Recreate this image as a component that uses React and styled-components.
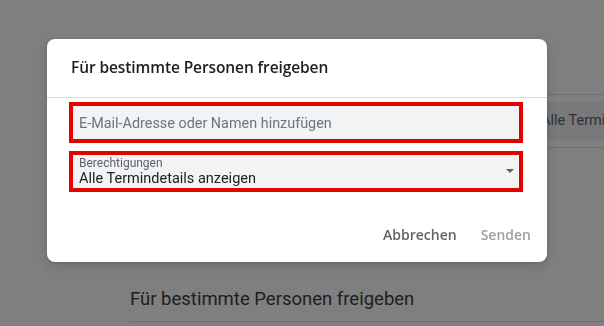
import React from "react";
import styled, { createGlobalStyle } from "styled-components";

const GlobalStyle = createGlobalStyle`
  html, body {
    margin: 0;
    padding: 0;
    background: #ffffff;
    overflow: hidden;
  }
  body {
    font-family: Roboto, "Liberation Sans", Arial, sans-serif;
  }
`;

const Page = styled.div`
  width: 604px;
  height: 326px;
  padding: 94px 0 0 130px;
  box-sizing: border-box;
`;

const Rule = styled.div`
  height: 1px;
  background: #dadce0;
  margin-top: ${(p) => p.$top || 0}px;
`;

const FieldRow = styled.div`
  display: grid;
  grid-template-columns: 395px 1fr;
  gap: 8px;
  margin-top: 7px;
`;

const PageField = styled.div`
  height: 38px;
  line-height: 38px;
  padding-left: 8px;
  background: #f1f3f4;
  font-size: 14.5px;
  color: #5f6368;
  white-space: nowrap;
  overflow: hidden;
`;

const PageHeading = styled.h2`
  margin: 137px 0 0;
  padding-bottom: 8px;
  border-bottom: 1px solid #dadce0;
  font-family: Roboto, sans-serif;
  font-weight: 400;
  font-size: 18.5px;
  line-height: 28px;
  color: #3c4043;
`;

const Scrim = styled.div`
  position: fixed;
  inset: 0;
  background: rgba(0, 0, 0, 0.5);
  padding: 39px 0 0 47px;
`;

const Dialog = styled.div`
  width: 500px;
  background: #ffffff;
  border-radius: 8px;
  box-shadow: 0 1px 3px rgba(60, 64, 67, 0.3), 0 4px 8px 3px rgba(60, 64, 67, 0.15);
  overflow: hidden;
`;

const Title = styled.div`
  padding: 16px 24px 18px 24px;
  font-family: "Open Sans", Roboto, sans-serif;
  font-weight: 600;
  font-size: 15.5px;
  line-height: 24px;
  letter-spacing: -0.1px;
  color: #202124;
`;

const Divider = styled.div`
  height: 1px;
  background: #dadce0;
`;

const Fields = styled.div`
  display: flex;
  flex-direction: column;
  gap: 8px;
  padding: 4px 24px 0 22px;
`;

const Field = styled.div`
  height: 41px;
  box-sizing: border-box;
  border: 4px solid #e60000;
  background: #f1f3f4;
  display: flex;
  align-items: ${(p) => (p.$select ? "stretch" : "center")};
  padding: 0 5px 0 6px;
`;

const Placeholder = styled.div`
  font-size: 14.4px;
  line-height: 33px;
  padding-top: 1px;
  color: #70757a;
`;

const SelectText = styled.div`
  flex: 1;
  padding-top: 1px;
`;

const SelectLabel = styled.div`
  font-size: 12px;
  line-height: 14px;
  color: #5f6368;
`;

const SelectValue = styled.div`
  font-size: 14.5px;
  line-height: 18px;
  color: #202124;
`;

const Arrow = styled.div`
  align-self: center;
  width: 0;
  height: 0;
  border-left: 4px solid transparent;
  border-right: 4px solid transparent;
  border-top: 4px solid #5f6368;
  margin-bottom: 2px;
`;

const Actions = styled.div`
  display: flex;
  justify-content: flex-end;
  padding: 25px 4px 9px;
`;

const Button = styled.button`
  border: none;
  background: none;
  height: 36px;
  padding: 0 12px;
  font-family: "Open Sans", Roboto, sans-serif;
  font-weight: 600;
  font-size: 14px;
  line-height: 36px;
  color: ${(p) => (p.disabled ? "#9aa0a6" : "#5f6368")};
  cursor: pointer;
`;

export default function App() {
  return (
    <>
      <GlobalStyle />
      <Page>
        <Rule />
        <FieldRow>
          <PageField />
          <PageField>Alle Termindetails anzeigen</PageField>
        </FieldRow>
        <Rule $top={7} />
        <PageHeading>Für bestimmte Personen freigeben</PageHeading>
      </Page>
      <Scrim>
        <Dialog>
          <Title>Für bestimmte Personen freigeben</Title>
          <Divider />
          <Fields>
            <Field>
              <Placeholder>E-Mail-Adresse oder Namen hinzufügen</Placeholder>
            </Field>
            <Field $select>
              <SelectText>
                <SelectLabel>Berechtigungen</SelectLabel>
                <SelectValue>Alle Termindetails anzeigen</SelectValue>
              </SelectText>
              <Arrow />
            </Field>
          </Fields>
          <Actions>
            <Button>Abbrechen</Button>
            <Button disabled>Senden</Button>
          </Actions>
        </Dialog>
      </Scrim>
    </>
  );
}
